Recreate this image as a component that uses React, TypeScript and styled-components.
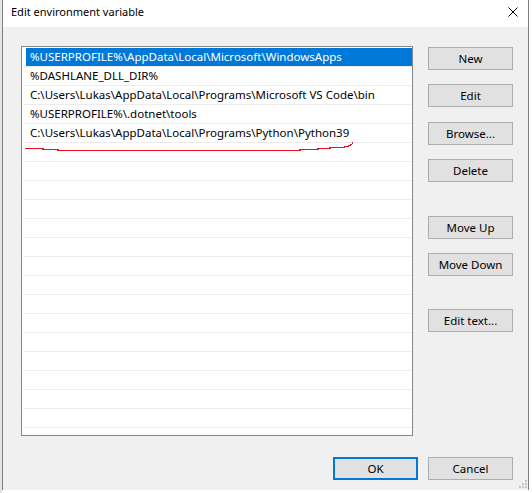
import React from 'react';
import styled, { createGlobalStyle } from 'styled-components';

const GlobalStyle = createGlobalStyle`
  html, body {
    margin: 0;
    padding: 0;
    background: #ffffff;
  }

  body {
    font-family: 'Noto Sans', 'Liberation Sans', sans-serif;
    font-size: 11.5px;
    color: #000;
  }
`;

interface PathEntry {
  value: string;
}

const entries: PathEntry[] = [
  { value: '%USERPROFILE%\\AppData\\Local\\Microsoft\\WindowsApps' },
  { value: '%DASHLANE_DLL_DIR%' },
  { value: 'C:\\Users\\Lukas\\AppData\\Local\\Programs\\Microsoft VS Code\\bin' },
  { value: '%USERPROFILE%\\.dotnet\\tools' },
  { value: 'C:\\Users\\Lukas\\AppData\\Local\\Programs\\Python\\Python39' },
];

const ROW_COUNT = 20;

const sideButtons = [
  { label: 'New', gap: 0 },
  { label: 'Edit', gap: 14 },
  { label: 'Browse...', gap: 15 },
  { label: 'Delete', gap: 14 },
  { label: 'Move Up', gap: 34 },
  { label: 'Move Down', gap: 14 },
  { label: 'Edit text...', gap: 33 },
];

const App: React.FC = () => {
  const rows = Array.from({ length: ROW_COUNT }, (_, i) => entries[i]?.value ?? '');

  return (
    <>
      <GlobalStyle />
      <StyledDesktop>
        <StyledDialog>
          <StyledTitleBar>
            <StyledTitle>Edit environment variable</StyledTitle>
            <StyledClose>
              <svg width="10" height="10" viewBox="0 0 10 10">
                <path d="M0.5 0.5 L9.5 9.5 M9.5 0.5 L0.5 9.5" stroke="#000" strokeWidth="1" />
              </svg>
            </StyledClose>
          </StyledTitleBar>

          <StyledBody>
            <StyledMain>
              <StyledList>
                {rows.map((value, i) => (
                  <StyledRow key={i}>
                    <StyledCell $selected={i === 0}>{value}</StyledCell>
                  </StyledRow>
                ))}
                {/* red pen stroke under the Python entry */}
                <StyledScribble width="340" height="12" viewBox="0 0 340 12">
                  <polyline
                    points="0,7.5 18,7.5 18,8.5 33,8.5 33,9.5 275,9.5 275,8.5 293,8.5 293,7.5 305,7.5 305,6.5 318,6.5 322,5.5 325,4.5 327,3 328,1.5"
                    fill="none"
                    stroke="#e81123"
                    strokeWidth="1.2"
                    shapeRendering="crispEdges"
                  />
                </StyledScribble>
              </StyledList>

              <StyledSideColumn>
                {sideButtons.map((b) => (
                  <StyledButton key={b.label} $gap={b.gap}>
                    {b.label}
                  </StyledButton>
                ))}
              </StyledSideColumn>
            </StyledMain>

            <StyledFooter>
              <StyledButton $gap={0} $primary>
                OK
              </StyledButton>
              <StyledButton $gap={0}>Cancel</StyledButton>
            </StyledFooter>
          </StyledBody>

          <StyledGrip width="8" height="8" viewBox="0 0 8 8">
            <rect x="6" y="0" width="2" height="2" fill="#c4c4c4" />
            <rect x="3" y="3" width="2" height="2" fill="#c4c4c4" />
            <rect x="6" y="3" width="2" height="2" fill="#c4c4c4" />
            <rect x="0" y="6" width="2" height="2" fill="#c4c4c4" />
            <rect x="3" y="6" width="2" height="2" fill="#c4c4c4" />
            <rect x="6" y="6" width="2" height="2" fill="#c4c4c4" />
          </StyledGrip>
        </StyledDialog>
      </StyledDesktop>
    </>
  );
};

const StyledDesktop = styled.div`
  width: 532px;
  height: 493px;
  background: linear-gradient(to right, #e6e6e6 2px, #ffffff 2px);
  display: flex;
  align-items: flex-start;
`;

const StyledDialog = styled.div`
  position: relative;
  margin-left: 2px;
  width: 527px;
  height: 490px;
  box-sizing: border-box;
  border-left: 1px solid #7e7e7e;
  border-right: 1px solid #7e7e7e;
  background: #f0f0f0;
  display: flex;
  flex-direction: column;
`;

const StyledTitleBar = styled.div`
  height: 27px;
  flex: none;
  background: #ffffff;
  display: flex;
  align-items: center;
  justify-content: space-between;
  padding-left: 8px;
`;

const StyledTitle = styled.div`
  font-size: 11px;
  line-height: 16px;
  padding-bottom: 3px;
`;

const StyledClose = styled.div`
  width: 30px;
  height: 27px;
  display: flex;
  align-items: center;
  justify-content: center;
  padding-bottom: 4px;
  box-sizing: border-box;
`;

const StyledBody = styled.div`
  flex: 1;
  display: flex;
  flex-direction: column;
  padding: 19px 15px 0 18px;
`;

const StyledMain = styled.div`
  display: flex;
  gap: 15px;
`;

const StyledList = styled.div`
  position: relative;
  width: 392px;
  height: 390px;
  box-sizing: border-box;
  border: 1px solid #828790;
  background: #ffffff;
  padding: 1px 0 0 1px;
  overflow: hidden;
`;

const StyledRow = styled.div`
  height: 18px;
  border-bottom: 1px solid #ececec;
  display: flex;
`;

const StyledCell = styled.div<{ $selected?: boolean }>`
  flex: 1;
  margin-left: 3px;
  padding-left: 4px;
  line-height: 18px;
  white-space: nowrap;
  background: ${(p) => (p.$selected ? '#0078d7' : 'transparent')};
  color: ${(p) => (p.$selected ? '#ffffff' : '#000000')};
`;

const StyledScribble = styled.svg`
  position: absolute;
  left: 3px;
  top: 94px;
`;

const StyledSideColumn = styled.div`
  display: flex;
  flex-direction: column;
  padding-top: 1px;
`;

const StyledButton = styled.div<{ $gap: number; $primary?: boolean }>`
  width: 85px;
  height: 23px;
  box-sizing: border-box;
  margin-top: ${(p) => p.$gap}px;
  background: #e1e1e1;
  border: ${(p) => (p.$primary ? '2px solid #0078d7' : '1px solid #adadad')};
  display: flex;
  align-items: center;
  justify-content: center;
  font-size: 11.5px;
  line-height: 16px;
`;

const StyledFooter = styled.div`
  display: flex;
  justify-content: flex-end;
  gap: 10px;
  margin-top: 21px;
`;

const StyledGrip = styled.svg`
  position: absolute;
  right: 1px;
  bottom: 2px;
`;

export default App;
